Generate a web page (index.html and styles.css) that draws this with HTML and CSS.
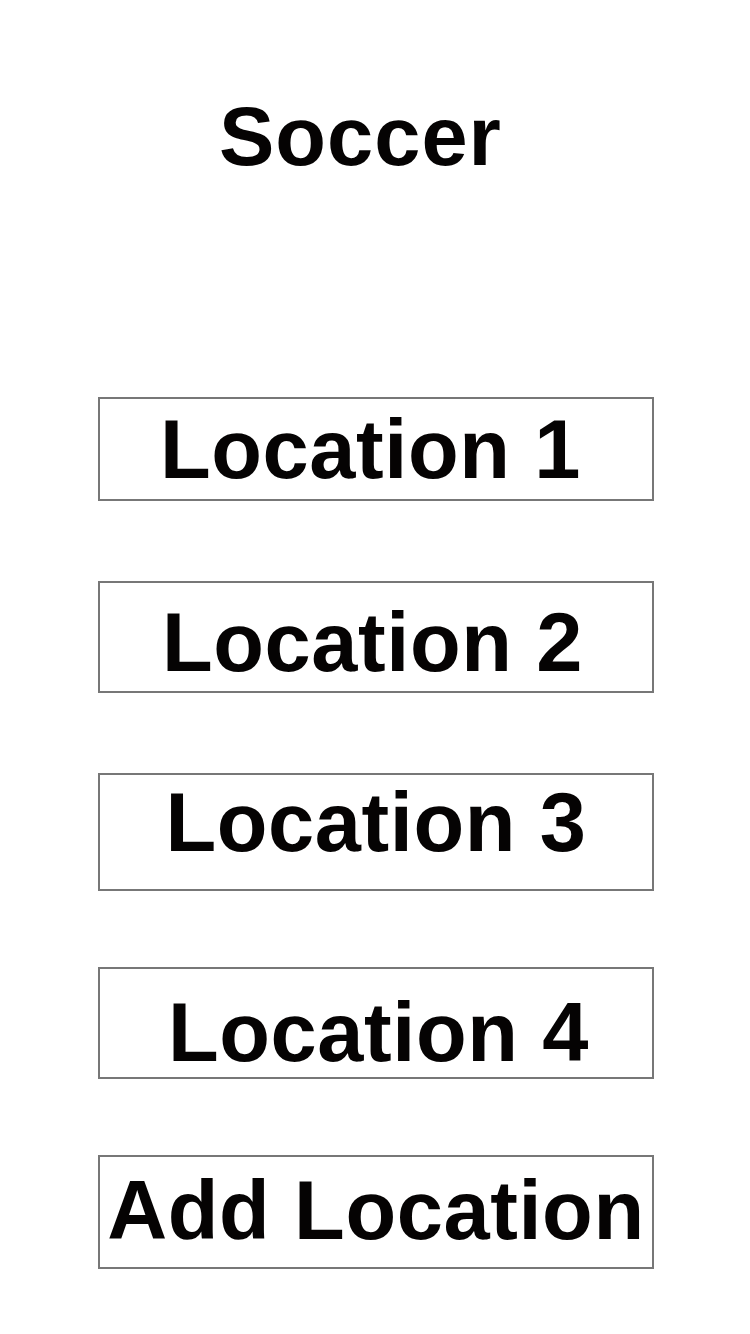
FILE: index.html
```html
<!DOCTYPE html>
<html>
<head>
<meta charset="utf-8">
<link rel="stylesheet" href="styles.css">
</head>
<body>
<div class="page">
  <h1 class="title">Soccer</h1>
  <div class="list">
    <div class="loc loc-1">Location 1</div>
    <div class="loc loc-2">Location 2</div>
    <div class="loc loc-3">Location 3</div>
    <div class="loc loc-4">Location 4</div>
    <div class="loc loc-5">Add Location</div>
  </div>
</div>
</body>
</html>
```
FILE: styles.css
```css
html, body {
  margin: 0;
  padding: 0;
  background: #ffffff;
}
.page {
  width: 750px;
  height: 1334px;
  font-family: "Liberation Sans", Arial, sans-serif;
  font-weight: bold;
  color: #050303;
  display: flex;
  flex-direction: column;
}
.title {
  margin: 0;
  padding: 96px 0 0 219px;
  font-size: 83px;
  line-height: 82px;
  font-weight: bold;
  letter-spacing: 1px;
}
.list {
  margin-top: 219px;
  padding-left: 98px;
  display: flex;
  flex-direction: column;
}
.loc {
  box-sizing: border-box;
  width: 556px;
  border: 2px solid #777777;
  font-size: 83px;
  line-height: 82px;
  text-align: center;
  white-space: nowrap;
  letter-spacing: 0.6px;
}
.loc-1 { padding: 10px 11px 8px 0; }
.loc-2 { padding: 19px 7px 7px 0; margin-top: 80px; }
.loc-3 { padding: 7px 0 25px; margin-top: 80px; }
.loc-4 { padding: 23px 0 3px 5px; margin-top: 76px; }
.loc-5 { padding: 13px 0 15px; margin-top: 76px; }
```
